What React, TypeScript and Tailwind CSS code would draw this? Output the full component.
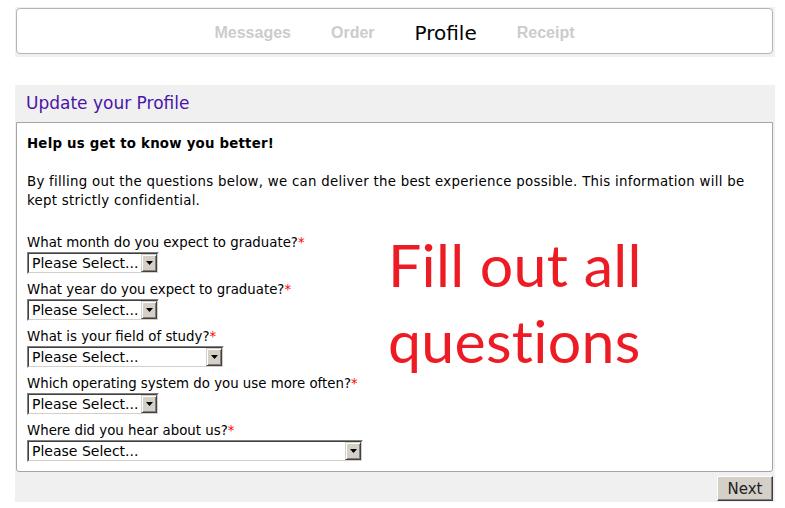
import React from "react";

const questions: { label: string; w: string }[] = [
  { label: "What month do you expect to graduate?", w: "w-[132px]" },
  { label: "What year do you expect to graduate?", w: "w-[132px]" },
  { label: "What is your field of study?", w: "w-[197px]" },
  { label: "Which operating system do you use more often?", w: "w-[132px]" },
  { label: "Where did you hear about us?", w: "w-[336px]" },
];

function FakeSelect({ w }: { w: string }) {
  return (
    <div className={`${w} h-[22px] border border-t-[#808080] border-l-[#808080] border-b-white border-r-white`}>
      <div className="flex h-full border border-t-[#404040] border-l-[#404040] border-b-[#d4d0c8] border-r-[#d4d0c8] bg-white">
        <div className="flex-1 overflow-hidden whitespace-nowrap pl-[3px] text-[14px] leading-[18px] text-black">
          Please Select...
        </div>
        <div className="flex w-[16px] items-center justify-center border border-t-[#d4d0c8] border-l-[#d4d0c8] border-b-[#404040] border-r-[#404040] bg-[#d4d0c8] shadow-[inset_1px_1px_0_#ffffff,inset_-1px_-1px_0_#808080]">
          <svg width="7" height="4" viewBox="0 0 7 4">
            <path d="M0 0H7L3.5 4Z" fill="#000" />
          </svg>
        </div>
      </div>
    </div>
  );
}

export default function App() {
  return (
    <div className="min-h-[508px] bg-white font-['DejaVu_Sans',Verdana,sans-serif] text-black">
      <div className="ml-[15px] w-[760px] pt-[7px]">
        {/* Nav */}
        <div className="bg-[#f0f0f0] pb-[3px] pl-[1px] pr-[2px] pt-[1px]">
          <div className="flex h-[46px] items-center justify-center gap-[40px] rounded-[4px] border border-[#b4b4b4] bg-white pt-[3px]">
            <span className="font-['Liberation_Sans',Arial,sans-serif] text-[16px] font-bold text-[#cccccc]">Messages</span>
            <span className="font-['Liberation_Sans',Arial,sans-serif] text-[16px] font-bold text-[#cccccc]">Order</span>
            <span className="text-[20px] text-black">Profile</span>
            <span className="font-['Liberation_Sans',Arial,sans-serif] text-[16px] font-bold text-[#cccccc]">Receipt</span>
          </div>
        </div>

        {/* Section */}
        <div className="mt-[28px] bg-[#f0f0f0] pb-[1px] pl-[1px] pr-[2px]">
          <div className="flex h-[37px] items-center pl-[10px] text-[17px] text-[#4a14a8]">
            Update your Profile
          </div>
          <div className="rounded-b-[3px] border border-[#a5a5a5] bg-white px-[10px] pb-[9px] pt-[11px] text-[13.33px] leading-[19px]">
            <div className="font-bold tracking-[0.22px]">Help us get to know you better!</div>
            <p className="mt-[19px] tracking-[0.28px]">
              By filling out the questions below, we can deliver the best experience possible. This information will be
              <br />
              kept strictly confidential.
            </p>
            <div className="mt-[23px] flex items-start">
              <div className="flex w-[336px] flex-col gap-[6px]">
                {questions.map((q) => (
                  <div key={q.label} className="flex flex-col">
                    <div className="h-[19px] whitespace-nowrap leading-[19px]">
                      {q.label}
                      <span className="text-[#ff0000]">*</span>
                    </div>
                    <FakeSelect w={q.w} />
                  </div>
                ))}
              </div>
              <div className="-mt-[6px] ml-[25px] font-['Lato',sans-serif] text-[59px] leading-[76px] tracking-[0.3px] text-[#ed1c24]">
                Fill out all
                <br />
                questions
              </div>
            </div>
          </div>
          <div className="flex justify-end pt-[4px]">
            <button className="h-[25px] w-[56px] border border-t-white border-l-white border-b-[#404040] border-r-[#404040] bg-[#d4d0c8] text-[15px] leading-[20px] text-[#222222] shadow-[inset_-1px_-1px_0_#808080]">
              Next
            </button>
          </div>
        </div>
      </div>
    </div>
  );
}
